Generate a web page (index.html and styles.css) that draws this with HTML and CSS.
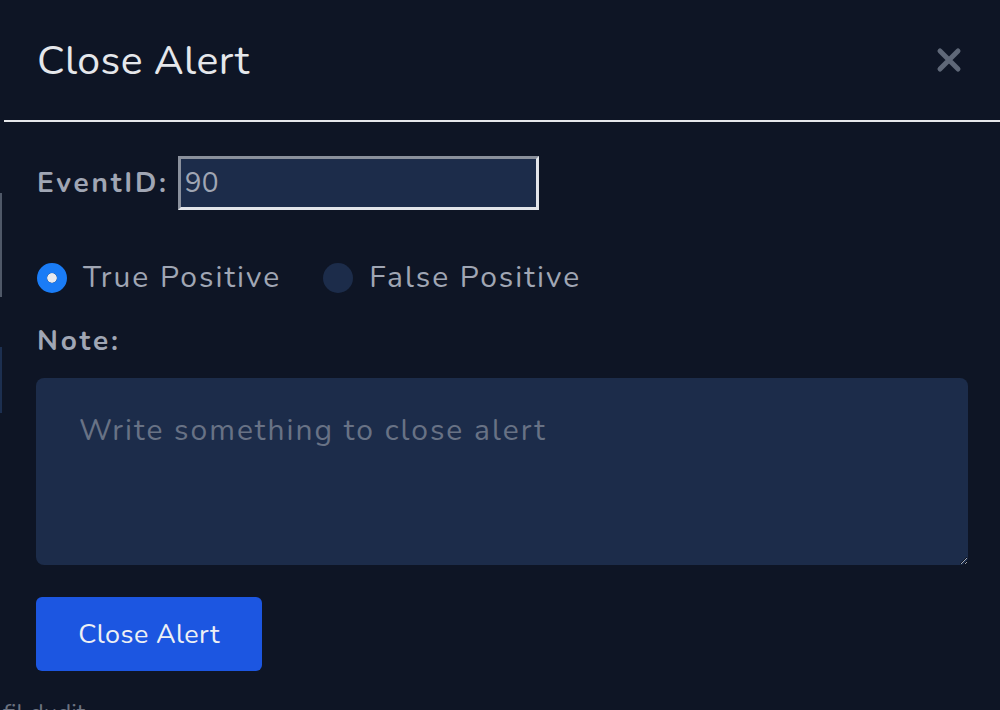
FILE: index.html
```html
<!DOCTYPE html>
<html lang="en">
<head>
    <meta charset="UTF-8">
    <meta name="viewport" content="width=device-width, initial-scale=1.0">
    <title>Close Alert</title>
    <link rel="stylesheet" href="styles.css">
</head>
<body>
    <div class="page">
        <div class="rail">
            <span class="rail-line gray"></span>
            <span class="rail-line blue"></span>
        </div>
        <div class="modal">
            <div class="modal-header">
                <h2>Close Alert</h2>
                <button class="close-btn" aria-label="Close">
                    <svg width="28" height="28" viewBox="0 0 28 28">
                        <path d="M5 5 L23 23 M23 5 L5 23" stroke="#5f6878" stroke-width="5" stroke-linecap="round"/>
                    </svg>
                </button>
            </div>
            <form class="modal-body" onsubmit="return false">
                <div class="event-row">
                    <label for="eventId">EventID:</label>
                    <input id="eventId" type="text" value="90">
                </div>
                <div class="radio-row">
                    <label class="radio">
                        <input type="radio" name="verdict" checked>
                        <span class="dot"></span>
                        True Positive
                    </label>
                    <label class="radio">
                        <input type="radio" name="verdict">
                        <span class="dot"></span>
                        False Positive
                    </label>
                </div>
                <label class="note-label" for="note">Note:</label>
                <textarea id="note" placeholder="Write something to close alert"></textarea>
                <button class="submit-btn" type="submit">Close Alert</button>
            </form>
        </div>
    </div>
    <div class="behind">fil dudit</div>
</body>
</html>
```

FILE: styles.css
```css
body {
    margin: 0;
    background-color: #0e1525;
    font-family: "Nunito", "Lato", sans-serif;
    overflow: hidden;
    height: 710px;
}
.page {
    display: flex;
}
.rail {
    width: 4px;
    display: flex;
    flex-direction: column;
}
.rail-line {
    display: block;
    width: 2px;
}
.rail-line.gray {
    margin-top: 193px;
    height: 104px;
    background-color: #4f5868;
}
.rail-line.blue {
    margin-top: 50px;
    height: 66px;
    background-color: #1c2f50;
}
.modal {
    flex: 1;
}
.modal-header {
    height: 122px;
    display: flex;
    align-items: center;
    justify-content: space-between;
    padding: 0 37px 0 33px;
    border-bottom: 2px solid #e5e7eb;
    box-sizing: border-box;
}
.modal-header h2 {
    margin: 0;
    color: #e5e7eb;
    font-size: 41px;
    font-weight: 400;
    letter-spacing: 0.4px;
}
.close-btn {
    background: none;
    border: 0;
    padding: 0;
    width: 28px;
    height: 28px;
    cursor: pointer;
}
.modal-body {
    padding: 34px 32px 26px 32px;
    display: flex;
    flex-direction: column;
}
.event-row {
    display: flex;
    align-items: center;
    padding-left: 1px;
}
.event-row label,
.note-label {
    color: #a0a6b4;
    font-size: 28px;
    font-weight: 700;
    letter-spacing: 2.8px;
}
.event-row input {
    margin-left: 9px;
    width: 361px;
    height: 54px;
    box-sizing: border-box;
    background-color: #1c2c4a;
    border: 3px solid #e2e5ea;
    border-top-color: #8a909c;
    border-left-color: #8a909c;
    color: #a0a6b4;
    font-family: inherit;
    font-size: 28px;
    padding: 0 4px;
    outline: none;
}
.radio-row {
    display: flex;
    gap: 42px;
    margin-top: 47px;
    padding-left: 1px;
}
.radio {
    display: flex;
    align-items: center;
    gap: 16px;
    color: #a0a6b4;
    font-size: 30px;
    letter-spacing: 2px;
    cursor: pointer;
}
.radio input {
    display: none;
}
.dot {
    width: 30px;
    height: 30px;
    border-radius: 50%;
    background-color: #1c2c4a;
    box-sizing: border-box;
}
.radio input:checked + .dot {
    border: 10px solid #1a7cf6;
    background-clip: padding-box;
    background-color: #e8eaef;
}
.note-label {
    margin-top: 24px;
    padding-left: 1px;
}
textarea {
    margin-top: 18px;
    height: 187px;
    box-sizing: border-box;
    background-color: #1c2c4a;
    border: 0;
    border-radius: 8px;
    padding: 32px 43px;
    color: #a0a6b4;
    font-family: inherit;
    font-size: 30px;
    letter-spacing: 2px;
    outline: none;
}
textarea::placeholder {
    color: #687285;
}
.submit-btn {
    margin-top: 32px;
    align-self: flex-start;
    width: 226px;
    height: 74px;
    background-color: #1c56e1;
    border: 0;
    border-radius: 6px;
    color: #eef0f4;
    font-family: inherit;
    font-size: 27px;
    letter-spacing: 0.4px;
    cursor: pointer;
}
.behind {
    padding-left: 3px;
    color: #6b7280;
    font-size: 24px;
}
```
